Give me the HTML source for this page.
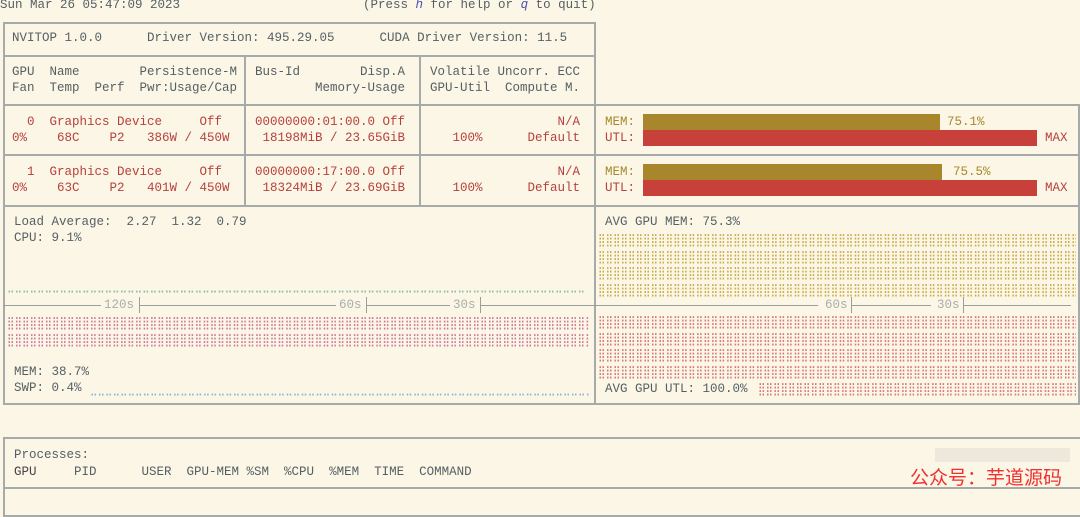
<!DOCTYPE html>
<html><head><meta charset="utf-8"><style>
body{margin:0;width:1080px;height:501px;background:#fbf6e6;overflow:hidden;position:relative;font-family:"Liberation Mono","DejaVu Sans Mono",monospace;font-size:12.5px;color:#566064}
.t{position:absolute;white-space:pre;line-height:16px}
.b{position:absolute;border:2px solid #a6abaa;box-sizing:border-box}
.h{position:absolute;height:2px;background:#a6abaa}
.v{position:absolute;width:2px;background:#a6abaa}
.r{color:#b8403c}.g{color:#a8882c}
.clip{position:absolute;overflow:hidden}
.br{font-family:"DejaVu Sans Mono",monospace;font-size:12.5px;white-space:pre;transform:scaleX(0.82);transform-origin:0 0;position:absolute;left:0;top:0}
.ax{position:absolute;height:1px;background:#9a9e9c}
.tk{position:absolute;width:1px;height:16px;background:#9a9e9c}
.al{color:#a9aeac}
</style></head><body>
<div class="t" style="left:0;top:-3px">Sun Mar 26 05:47:09 2023</div>
<div class="t" style="left:363px;top:-3px">(Press <i style="color:#4a4fb0">h</i> for help or <i style="color:#4a4fb0">q</i> to quit)</div>

<div class="b" style="left:3px;top:22px;width:593px;height:185px"></div>
<div class="h" style="left:3px;top:55px;width:593px"></div>
<div class="h" style="left:3px;top:104px;width:1077px"></div>
<div class="h" style="left:3px;top:154px;width:1077px"></div>
<div class="v" style="left:244px;top:56px;height:150px"></div>
<div class="v" style="left:419px;top:56px;height:150px"></div>
<div class="v" style="left:1078px;top:104px;height:300px"></div>

<div class="t" style="left:12px;top:30px">NVITOP 1.0.0      Driver Version: 495.29.05      CUDA Driver Version: 11.5</div>
<div class="t" style="left:12px;top:64px">GPU  Name        Persistence-M
Fan  Temp  Perf  Pwr:Usage/Cap</div>
<div class="t" style="left:255px;top:64px">Bus-Id        Disp.A
        Memory-Usage</div>
<div class="t" style="left:430px;top:64px">Volatile Uncorr. ECC
GPU-Util  Compute M.</div>

<div class="t r" style="left:12px;top:114px">  0  Graphics Device     Off
0%    68C    P2   386W / 450W</div>
<div class="t r" style="left:255px;top:114px">00000000:01:00.0 Off
 18198MiB / 23.65GiB</div>
<div class="t r" style="left:430px;top:114px">                 N/A
   100%      Default</div>
<div class="t r" style="left:12px;top:164px">  1  Graphics Device     Off
0%    63C    P2   401W / 450W</div>
<div class="t r" style="left:255px;top:164px">00000000:17:00.0 Off
 18324MiB / 23.69GiB</div>
<div class="t r" style="left:430px;top:164px">                 N/A
   100%      Default</div>

<div class="t g" style="left:605px;top:114px">MEM:</div>
<div class="t r" style="left:605px;top:130px">UTL:</div>
<div style="position:absolute;left:643px;top:114px;width:297px;height:16px;background:#a8862c"></div>
<div style="position:absolute;left:643px;top:130px;width:394px;height:16px;background:#c8403a"></div>
<div class="t g" style="left:947px;top:114px">75.1%</div>
<div class="t r" style="left:1045px;top:130px">MAX</div>
<div class="t g" style="left:605px;top:164px">MEM:</div>
<div class="t r" style="left:605px;top:180px">UTL:</div>
<div style="position:absolute;left:643px;top:164px;width:299px;height:16px;background:#a8862c"></div>
<div style="position:absolute;left:643px;top:180px;width:394px;height:16px;background:#c8403a"></div>
<div class="t g" style="left:953px;top:164px">75.5%</div>
<div class="t r" style="left:1045px;top:180px">MAX</div>

<div class="b" style="left:3px;top:205px;width:1077px;height:200px"></div>
<div class="v" style="left:594px;top:205px;height:200px"></div>
<div class="t" style="left:14px;top:214px">Load Average:  2.27  1.32  0.79
CPU: 9.1%</div>
<div class="clip" style="left:7px;top:285px;width:582px;height:16px"><div class="br" style="color:#86bca0;line-height:16px">⠒⠒⠒⠒⠒⠒⠒⠒⠒⠒⠒⠒⠒⠒⠒⠒⠒⠒⠒⠒⠒⠒⠒⠒⠒⠒⠒⠒⠒⠒⠒⠒⠒⠒⠒⠒⠒⠒⠒⠒⠒⠒⠒⠒⠒⠒⠒⠒⠒⠒⠒⠒⠒⠒⠒⠒⠒⠒⠒⠒⠒⠒⠒⠒⠒⠒⠒⠒⠒⠒⠒⠒⠒⠒⠒⠒⠒</div></div>
<div class="clip" style="left:7px;top:314px;width:582px;height:34px"><div class="br" style="color:#d07a9a;line-height:17px">⣿⣿⣿⣿⣿⣿⣿⣿⣿⣿⣿⣿⣿⣿⣿⣿⣿⣿⣿⣿⣿⣿⣿⣿⣿⣿⣿⣿⣿⣿⣿⣿⣿⣿⣿⣿⣿⣿⣿⣿⣿⣿⣿⣿⣿⣿⣿⣿⣿⣿⣿⣿⣿⣿⣿⣿⣿⣿⣿⣿⣿⣿⣿⣿⣿⣿⣿⣿⣿⣿⣿⣿⣿⣿⣿⣿⣿⣿
⣿⣿⣿⣿⣿⣿⣿⣿⣿⣿⣿⣿⣿⣿⣿⣿⣿⣿⣿⣿⣿⣿⣿⣿⣿⣿⣿⣿⣿⣿⣿⣿⣿⣿⣿⣿⣿⣿⣿⣿⣿⣿⣿⣿⣿⣿⣿⣿⣿⣿⣿⣿⣿⣿⣿⣿⣿⣿⣿⣿⣿⣿⣿⣿⣿⣿⣿⣿⣿⣿⣿⣿⣿⣿⣿⣿⣿⣿</div></div>
<div class="t" style="left:14px;top:364px">MEM: 38.7%
SWP: 0.4%</div>
<div class="clip" style="left:90px;top:381px;width:499px;height:16px"><div class="br" style="color:#8eb4d2;line-height:16px">⣀⣀⣀⣀⣀⣀⣀⣀⣀⣀⣀⣀⣀⣀⣀⣀⣀⣀⣀⣀⣀⣀⣀⣀⣀⣀⣀⣀⣀⣀⣀⣀⣀⣀⣀⣀⣀⣀⣀⣀⣀⣀⣀⣀⣀⣀⣀⣀⣀⣀⣀⣀⣀⣀⣀⣀⣀⣀⣀⣀⣀⣀⣀⣀⣀⣀⣀⣀⣀</div></div>

<div class="ax" style="left:3px;top:305px;width:98px"></div>
<div class="t al" style="left:104px;top:297px">120s</div>
<div class="tk" style="left:139px;top:297px"></div>
<div class="ax" style="left:140px;top:305px;width:196px"></div>
<div class="t al" style="left:339px;top:297px">60s</div>
<div class="tk" style="left:366px;top:297px"></div>
<div class="ax" style="left:367px;top:305px;width:83px"></div>
<div class="t al" style="left:453px;top:297px">30s</div>
<div class="tk" style="left:480px;top:297px"></div>
<div class="ax" style="left:481px;top:305px;width:590px"></div>
<div style="position:absolute;left:818px;top:300px;width:34px;height:12px;background:#fbf6e6"></div>
<div class="t al" style="left:825px;top:297px">60s</div>
<div class="tk" style="left:851px;top:297px"></div>
<div style="position:absolute;left:931px;top:300px;width:32px;height:12px;background:#fbf6e6"></div>
<div class="t al" style="left:937px;top:297px">30s</div>
<div class="tk" style="left:963px;top:297px"></div>

<div class="t" style="left:605px;top:214px">AVG GPU MEM: 75.3%</div>
<div class="clip" style="left:598px;top:232px;width:478px;height:67px"><div class="br" style="color:#c9ad4a;line-height:16.7px">⣿⣿⣿⣿⣿⣿⣿⣿⣿⣿⣿⣿⣿⣿⣿⣿⣿⣿⣿⣿⣿⣿⣿⣿⣿⣿⣿⣿⣿⣿⣿⣿⣿⣿⣿⣿⣿⣿⣿⣿⣿⣿⣿⣿⣿⣿⣿⣿⣿⣿⣿⣿⣿⣿⣿⣿⣿⣿⣿⣿⣿⣿⣿⣿
⣿⣿⣿⣿⣿⣿⣿⣿⣿⣿⣿⣿⣿⣿⣿⣿⣿⣿⣿⣿⣿⣿⣿⣿⣿⣿⣿⣿⣿⣿⣿⣿⣿⣿⣿⣿⣿⣿⣿⣿⣿⣿⣿⣿⣿⣿⣿⣿⣿⣿⣿⣿⣿⣿⣿⣿⣿⣿⣿⣿⣿⣿⣿⣿
⣿⣿⣿⣿⣿⣿⣿⣿⣿⣿⣿⣿⣿⣿⣿⣿⣿⣿⣿⣿⣿⣿⣿⣿⣿⣿⣿⣿⣿⣿⣿⣿⣿⣿⣿⣿⣿⣿⣿⣿⣿⣿⣿⣿⣿⣿⣿⣿⣿⣿⣿⣿⣿⣿⣿⣿⣿⣿⣿⣿⣿⣿⣿⣿
⣿⣿⣿⣿⣿⣿⣿⣿⣿⣿⣿⣿⣿⣿⣿⣿⣿⣿⣿⣿⣿⣿⣿⣿⣿⣿⣿⣿⣿⣿⣿⣿⣿⣿⣿⣿⣿⣿⣿⣿⣿⣿⣿⣿⣿⣿⣿⣿⣿⣿⣿⣿⣿⣿⣿⣿⣿⣿⣿⣿⣿⣿⣿⣿</div></div>
<div class="clip" style="left:598px;top:314px;width:478px;height:67px"><div class="br" style="color:#d9787a;line-height:16.7px">⣿⣿⣿⣿⣿⣿⣿⣿⣿⣿⣿⣿⣿⣿⣿⣿⣿⣿⣿⣿⣿⣿⣿⣿⣿⣿⣿⣿⣿⣿⣿⣿⣿⣿⣿⣿⣿⣿⣿⣿⣿⣿⣿⣿⣿⣿⣿⣿⣿⣿⣿⣿⣿⣿⣿⣿⣿⣿⣿⣿⣿⣿⣿⣿
⣿⣿⣿⣿⣿⣿⣿⣿⣿⣿⣿⣿⣿⣿⣿⣿⣿⣿⣿⣿⣿⣿⣿⣿⣿⣿⣿⣿⣿⣿⣿⣿⣿⣿⣿⣿⣿⣿⣿⣿⣿⣿⣿⣿⣿⣿⣿⣿⣿⣿⣿⣿⣿⣿⣿⣿⣿⣿⣿⣿⣿⣿⣿⣿
⣿⣿⣿⣿⣿⣿⣿⣿⣿⣿⣿⣿⣿⣿⣿⣿⣿⣿⣿⣿⣿⣿⣿⣿⣿⣿⣿⣿⣿⣿⣿⣿⣿⣿⣿⣿⣿⣿⣿⣿⣿⣿⣿⣿⣿⣿⣿⣿⣿⣿⣿⣿⣿⣿⣿⣿⣿⣿⣿⣿⣿⣿⣿⣿
⣿⣿⣿⣿⣿⣿⣿⣿⣿⣿⣿⣿⣿⣿⣿⣿⣿⣿⣿⣿⣿⣿⣿⣿⣿⣿⣿⣿⣿⣿⣿⣿⣿⣿⣿⣿⣿⣿⣿⣿⣿⣿⣿⣿⣿⣿⣿⣿⣿⣿⣿⣿⣿⣿⣿⣿⣿⣿⣿⣿⣿⣿⣿⣿</div></div>
<div class="t" style="left:605px;top:381px">AVG GPU UTL: 100.0%</div>
<div class="clip" style="left:758px;top:381px;width:318px;height:16px"><div class="br" style="color:#d9787a;line-height:16px">⣿⣿⣿⣿⣿⣿⣿⣿⣿⣿⣿⣿⣿⣿⣿⣿⣿⣿⣿⣿⣿⣿⣿⣿⣿⣿⣿⣿⣿⣿⣿⣿⣿⣿⣿⣿⣿⣿⣿⣿⣿⣿⣿⣿⣿</div></div>

<div class="b" style="left:3px;top:437px;width:1080px;height:80px"></div>
<div class="h" style="left:3px;top:487px;width:1077px"></div>
<div class="t" style="left:14px;top:447px">Processes:</div>
<div class="t" style="left:14px;top:464px"><span style="color:#444">GPU</span>     PID      USER  GPU-MEM %SM  %CPU  %MEM  TIME  COMMAND</div>
<div style="position:absolute;left:935px;top:448px;width:135px;height:14px;background:#ece8dc"></div>
<div class="t" style="left:910px;top:468px;font-family:'Liberation Sans','Noto Sans CJK SC',sans-serif;font-size:19px;line-height:22px;color:#f03030">公众号：芋道源码</div>
</body></html>
